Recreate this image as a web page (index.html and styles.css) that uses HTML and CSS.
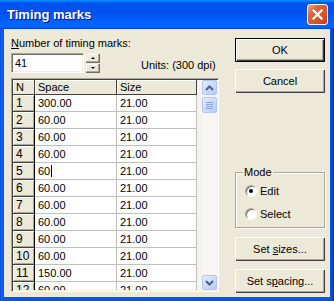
FILE: index.html
```html
<!DOCTYPE html>
<html lang="en">
    <head>
        <meta charset="UTF-8">
        <title>Timing marks</title>
        <link rel="stylesheet" href="styles.css">
    </head>
    <body>
        <div class="window">
            <div class="titlebar">
                <span class="title">Timing marks</span>
                <div class="close">
                    <svg width="11" height="11" viewBox="0 0 11 11">
                        <path d="M1.5 1.5 L9.5 9.5 M9.5 1.5 L1.5 9.5" stroke="#fff" stroke-width="2.2" stroke-linecap="square"/>
                    </svg>
                </div>
            </div>

            <div class="client">
                <div class="left">
                    <div class="count-label"><u>N</u>umber of timing marks:</div>
                    <div class="count-row">
                        <div class="edit">41</div>
                        <div class="spin">
                            <div class="spin-btn"><span class="tri-up"></span></div>
                            <div class="spin-btn"><span class="tri-down"></span></div>
                        </div>
                        <span class="units">Units: (300 dpi)</span>
                    </div>

                    <div class="grid">
                        <div class="grid-body">
                            <table class="marks">
                                <thead>
                                    <tr><th class="col-n">N</th><th class="col-space">Space</th><th class="col-size">Size</th></tr>
                                </thead>
                                <tbody>
                                    <tr><th>1</th><td>300.00</td><td>21.00</td></tr>
                                    <tr><th>2</th><td>60.00</td><td>21.00</td></tr>
                                    <tr><th>3</th><td>60.00</td><td>21.00</td></tr>
                                    <tr><th>4</th><td>60.00</td><td>21.00</td></tr>
                                    <tr><th>5</th><td><span class="caret">60</span></td><td>21.00</td></tr>
                                    <tr><th>6</th><td>60.00</td><td>21.00</td></tr>
                                    <tr><th>7</th><td>60.00</td><td>21.00</td></tr>
                                    <tr><th>8</th><td>60.00</td><td>21.00</td></tr>
                                    <tr><th>9</th><td>60.00</td><td>21.00</td></tr>
                                    <tr><th>10</th><td>60.00</td><td>21.00</td></tr>
                                    <tr><th>11</th><td>150.00</td><td>21.00</td></tr>
                                    <tr><th>12</th><td>60.00</td><td>21.00</td></tr>
                                </tbody>
                            </table>
                        </div>
                        <div class="vscroll">
                            <div class="sb-btn">
                                <svg width="9" height="6" viewBox="0 0 9 6"><path d="M1 5 L4.5 1.5 L8 5" fill="none" stroke="#4D6185" stroke-width="2"/></svg>
                            </div>
                            <div class="sb-thumb">
                                <span></span><span></span><span></span><span></span>
                            </div>
                            <div class="sb-track"></div>
                            <div class="sb-btn">
                                <svg width="9" height="6" viewBox="0 0 9 6"><path d="M1 1 L4.5 4.5 L8 1" fill="none" stroke="#4D6185" stroke-width="2"/></svg>
                            </div>
                        </div>
                    </div>
                </div>

                <div class="right">
                    <div class="btn default">OK</div>
                    <div class="btn cancel">Cancel</div>

                    <div class="group">
                        <span class="group-title">Mode</span>
                        <div class="radio-row"><span class="radio checked"></span><span>Edit</span></div>
                        <div class="radio-row"><span class="radio"></span><span>Select</span></div>
                    </div>

                    <div class="btn sizes"><span>Set <u>s</u>izes...</span></div>
                    <div class="btn spacing"><span>Set s<u>p</u>acing...</span></div>
                </div>
            </div>
        </div>
    </body>
</html>
```

FILE: styles.css
```css
body {
    margin: 0;
    font-family: "Liberation Sans", Arial, sans-serif;
    font-size: 11px;
    color: #000;
}
.window {
    width: 334px;
    height: 301px;
    display: flex;
    flex-direction: column;
    background: linear-gradient(to right, #0831D9 0, #166AEE 1px, #0058EE 3px, #0058EE 330px, #0042C8 333px, #001EA0 334px);
}
.titlebar {
    height: 29px;
    flex-shrink: 0;
    display: flex;
    align-items: center;
    padding: 0 6px 0 7px;
    background: linear-gradient(to bottom, #0997FF 0%, #0053EE 10%, #0050EE 40%, #0066FF 86%, #0066FF 92%, #005BFF 95%, #003DD7 100%);
}
.title {
    flex: 1;
    color: #fff;
    font-weight: bold;
    font-size: 13px;
    text-shadow: 1px 1px #0A1883;
}
.close {
    width: 19px;
    height: 19px;
    border: 1px solid #fff;
    border-radius: 3px;
    display: flex;
    align-items: center;
    justify-content: center;
    background: linear-gradient(135deg, #F3A58A 0%, #E2643A 30%, #D8502A 70%, #C0401E 100%);
}
.client {
    flex: 1;
    margin: 0 4px 4px;
    background: #ECE9D8;
    display: flex;
    padding: 0 5px 4px 7px;
}
.left {
    width: 208px;
    display: flex;
    flex-direction: column;
}
.count-label {
    margin-top: 8px;
    line-height: 13px;
}
.count-row {
    display: flex;
    margin-top: 3px;
}
.edit {
    width: 73px;
    height: 20px;
    box-sizing: border-box;
    background: #fff;
    border: 1px solid;
    border-color: #ACA899 #fff #fff #ACA899;
    box-shadow: inset 1px 1px #716F64, inset -1px -1px #F1EFE2;
    padding: 0 0 0 3px;
    line-height: 18px;
}
.spin {
    width: 15px;
    margin-left: 1px;
    display: flex;
    flex-direction: column;
}
.spin-btn {
    height: 10px;
    display: flex;
    align-items: center;
    justify-content: center;
    background: #ECE9D8;
    box-shadow: inset 1px 1px #F1EFE2, inset -1px -1px #716F64, inset -2px -2px #ACA899, inset 2px 2px #fff;
}
.tri-up, .tri-down {
    width: 0;
    height: 0;
    border-left: 2px solid transparent;
    border-right: 2px solid transparent;
}
.tri-up {
    border-bottom: 2px solid #000;
}
.tri-down {
    border-top: 2px solid #000;
}
.units {
    margin-left: 41px;
    align-self: center;
    margin-top: 4px;
}
.grid {
    margin-top: 5px;
    height: 214px;
    box-sizing: border-box;
    display: flex;
    border: 1px solid;
    border-color: #ACA899 #fff #fff #ACA899;
    box-shadow: inset 1px 1px #404040, inset -1px -1px #F1EFE2;
    padding: 1px;
    background: #F4F3EE;
}
.grid-body {
    flex: 1;
    overflow: hidden;
}
.marks {
    border-collapse: separate;
    border-spacing: 0;
    table-layout: fixed;
    width: 183px;
}
.marks th, .marks td {
    padding: 0;
    font-weight: normal;
    text-align: left;
    white-space: nowrap;
    overflow: hidden;
}
.marks thead th {
    height: 14px;
    line-height: 14px;
    padding-left: 3px;
    background: #ECE9D8;
    border-right: 1px solid #404040;
    border-bottom: 1px solid #404040;
    box-shadow: inset 1px 1px #fff;
}
.marks .col-n {
    width: 18px;
}
.marks .col-space {
    width: 78px;
}
.marks .col-size {
    width: 76px;
}
.marks tbody th {
    height: 16px;
    line-height: 16px;
    padding-left: 3px;
    background: #ECE9D8;
    border-right: 1px solid #000;
    border-bottom: 1px solid #404040;
    box-shadow: inset 1px 1px #fff, inset -1px -1px #ACA899;
    font-size: 12px;
}
.marks td {
    height: 16px;
    line-height: 16px;
    padding-left: 3px;
    background: #fff;
    border-right: 1px solid #C0C0C0;
    border-bottom: 1px solid #C0C0C0;
}
.caret {
    border-right: 1px solid #000;
    padding-right: 1px;
}
.vscroll {
    width: 15px;
    margin-left: 5px;
    display: flex;
    flex-direction: column;
    background: #F7F6F2;
}
.sb-btn, .sb-thumb {
    height: 15px;
    box-sizing: border-box;
    border: 1px solid #B5C7F0;
    border-radius: 2px;
    background: linear-gradient(135deg, #E2EBFE 0%, #C9D8FC 60%, #B4C8F6 100%);
    display: flex;
    align-items: center;
    justify-content: center;
}
.sb-thumb {
    margin-top: 2px;
    height: 16px;
    flex-direction: column;
    gap: 1px;
}
.sb-thumb span {
    width: 7px;
    height: 1px;
    background: #8CA6E0;
}
.sb-track {
    flex: 1;
}
.right {
    width: 90px;
    margin-left: 16px;
    display: flex;
    flex-direction: column;
}
.btn {
    height: 24px;
    box-sizing: border-box;
    display: flex;
    align-items: center;
    justify-content: center;
    background: #ECE9D8;
    box-shadow: inset 1px 1px #fff, inset -1px -1px #404040, inset -2px -2px #ACA899;
}
.btn.default {
    margin-top: 9px;
    border: 1px solid #000;
}
.btn.cancel {
    margin-top: 7px;
}
.group {
    margin-top: auto;
    display: flex;
    flex-direction: column;
    border: 1px solid #ACA899;
    box-shadow: 1px 1px #fff, inset 1px 1px #fff;
    padding: 0 0 2px 9px;
    height: 56px;
    box-sizing: border-box;
}
.group-title {
    align-self: flex-start;
    margin: -7px 0 0 -2px;
    padding: 0 1px;
    line-height: 13px;
    background: #ECE9D8;
}
.radio-row {
    height: 23px;
    display: flex;
    align-items: center;
    gap: 3px;
}
.radio {
    width: 12px;
    height: 12px;
    box-sizing: border-box;
    border-radius: 50%;
    border: 1px solid;
    border-color: #ACA899 #fff #fff #ACA899;
    background: #fff;
    box-shadow: inset 1px 1px #716F64;
    display: flex;
    align-items: center;
    justify-content: center;
}
.radio.checked::after {
    content: "";
    width: 4px;
    height: 4px;
    border-radius: 50%;
    background: #000;
}
.btn.sizes {
    margin-top: 9px;
}
.btn.spacing {
    margin-top: 8px;
}
```
